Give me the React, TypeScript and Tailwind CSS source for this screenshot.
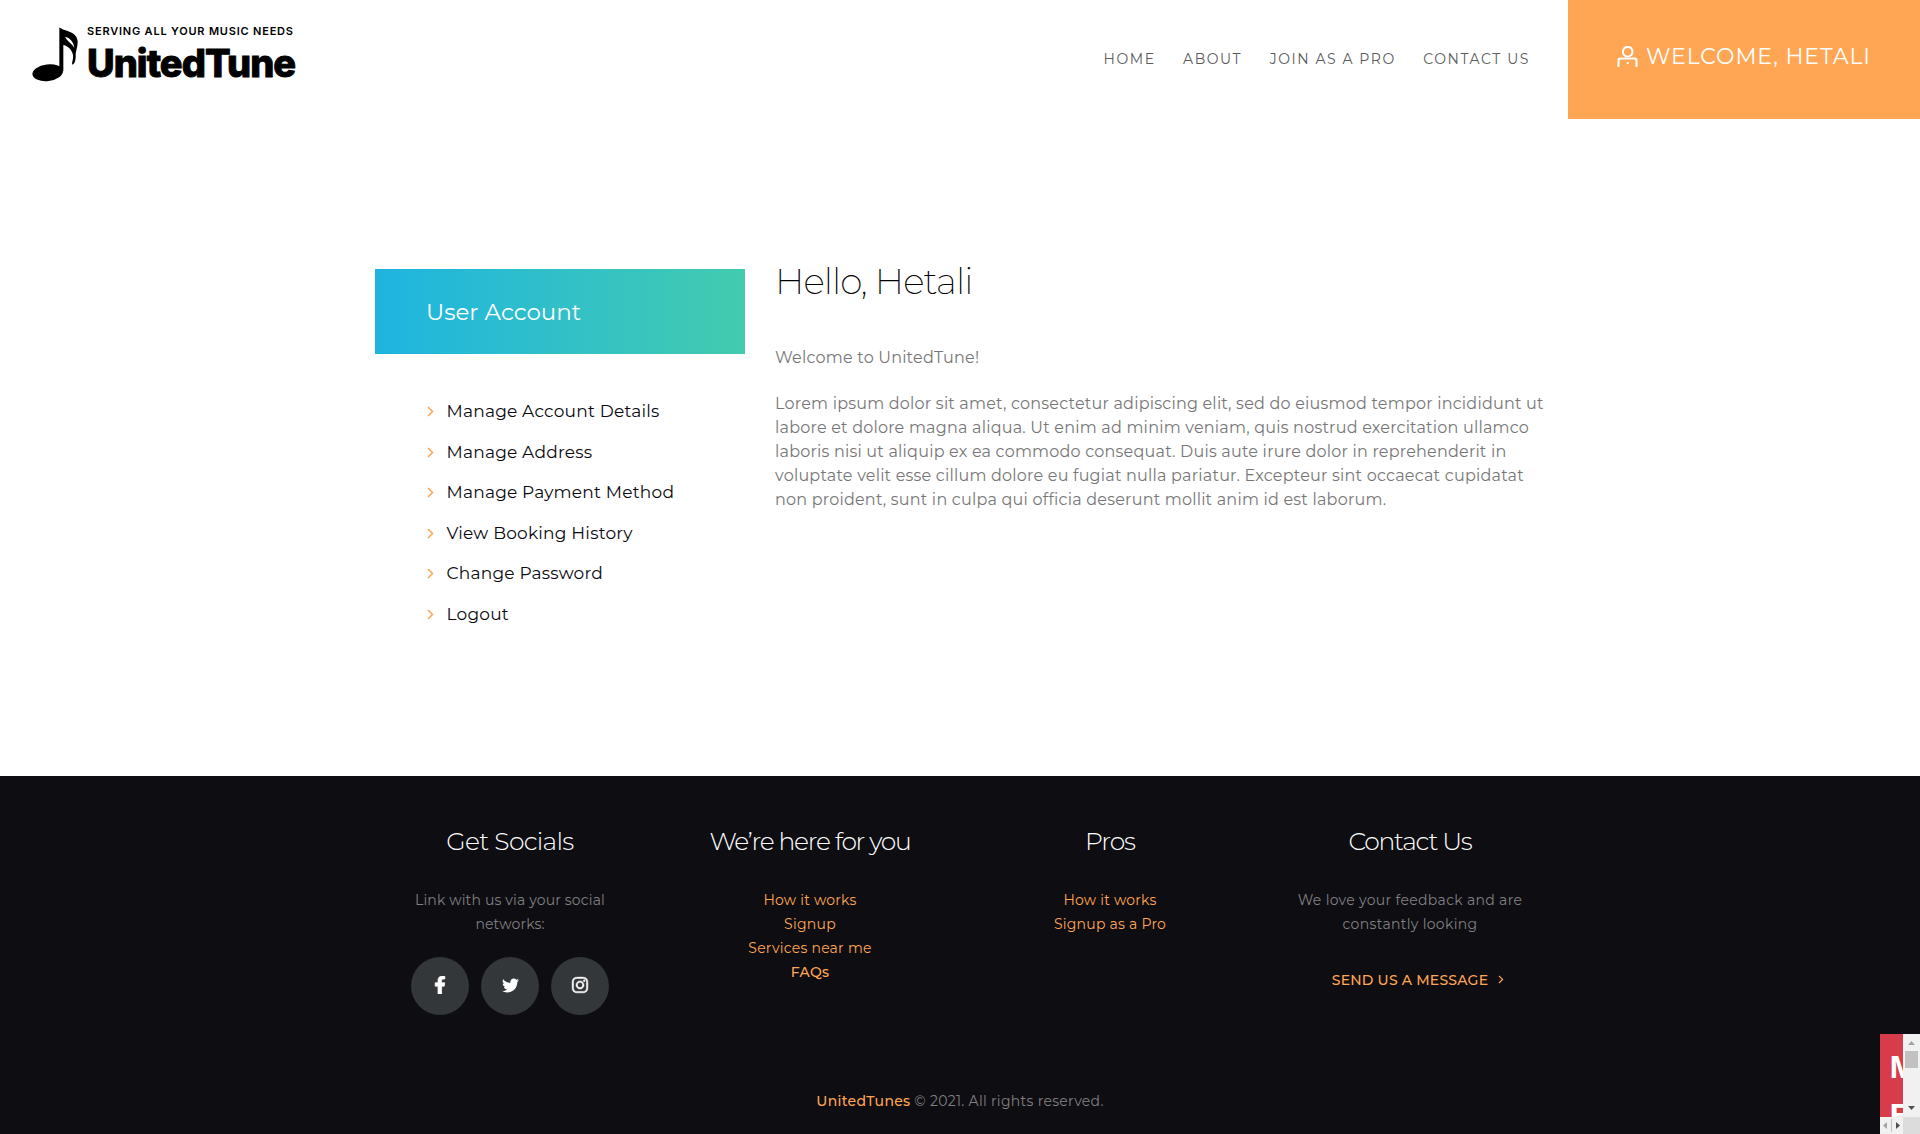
import React from "react";
import { FaFacebookF, FaTwitter, FaInstagram } from "react-icons/fa";

const NAV = ["HOME", "ABOUT", "JOIN AS A PRO", "CONTACT US"];

const MENU = [
  "Manage Account Details",
  "Manage Address",
  "Manage Payment Method",
  "View Booking History",
  "Change Password",
  "Logout",
];

const LOREM = [
  "Lorem ipsum dolor sit amet, consectetur adipiscing elit, sed do eiusmod tempor incididunt ut",
  "labore et dolore magna aliqua. Ut enim ad minim veniam, quis nostrud exercitation ullamco",
  "laboris nisi ut aliquip ex ea commodo consequat. Duis aute irure dolor in reprehenderit in",
  "voluptate velit esse cillum dolore eu fugiat nulla pariatur. Excepteur sint occaecat cupidatat",
  "non proident, sunt in culpa qui officia deserunt mollit anim id est laborum.",
];

function Chevron({ className }: { className: string }) {
  return (
    <svg viewBox="0 0 7 11" fill="none" stroke="currentColor" strokeWidth="1.5" className={className}>
      <path d="M1 1l4.500 4.500L1 10" />
    </svg>
  );
}

function Logo() {
  return (
    <a className="flex pl-[30px] pt-[25px] text-black">
      <svg viewBox="89 75 150 174" className="h-[58px] w-[50px]" fill="currentColor">
        <path
          fillRule="evenodd"
          d="M177 82C190 94 230 93 232 124C232 142 227 152 226 163C227 180 223 192 217 194C211 190 223 175 216 158C210 143 198 137 189 135L189 214L177 207ZM194 110C200 124 214 129 222 143C219 123 206 112 194 110Z"
        />
        <ellipse cx="142" cy="218" rx="46" ry="25" transform="rotate(-7 142 218)" />
      </svg>
      <div className="ml-[7px] font-['Inter',sans-serif]">
        <div className="h-[14px] text-[11px] leading-[12px] font-semibold tracking-[0.8px] whitespace-nowrap">
          SERVING ALL YOUR MUSIC NEEDS
        </div>
        <div className="text-[38px] leading-[48px] font-extrabold tracking-[-0.95px] [-webkit-text-stroke:0.9px_black]">
          UnitedTune
        </div>
      </div>
    </a>
  );
}

function Column({ title, tracking, children }: { title: string; tracking: string; children: React.ReactNode }) {
  return (
    <section className="w-[300px] text-center text-sm leading-6 tracking-[0.16px]">
      <h4 className={`mb-8 text-[25px] leading-[30px] font-light text-white ${tracking}`}>{title}</h4>
      {children}
    </section>
  );
}

function Social({ children }: { children: React.ReactNode }) {
  return (
    <a className="flex size-[58px] items-center justify-center rounded-full bg-[#343739] pb-[2px] text-white">{children}</a>
  );
}

function AdWidget() {
  return (
    <div className="absolute right-0 bottom-0 grid h-[100px] w-10 grid-cols-[23px_17px] grid-rows-[83px_17px] overflow-hidden bg-[#dcdcdc]">
      <div className="overflow-hidden bg-[#d63c49] pt-2 pl-[9px] font-['Open_Sans',sans-serif] text-[31px] leading-[48px] font-bold text-white">
        <div>M</div>
        <div>E</div>
      </div>
      <div className="flex flex-col items-center bg-[#f1f1f1]">
        <svg viewBox="0 0 17 17" className="size-[17px]" fill="#a3a3a3"><path d="M5 11L8.500 7L12 11Z" /></svg>
        <div className="h-[17px] w-[13px] bg-[#c1c1c1]" />
        <svg viewBox="0 0 17 17" className="mt-auto size-[17px]" fill="#505050"><path d="M5 6L8.500 10L12 6Z" /></svg>
      </div>
      <div className="flex bg-[#f1f1f1]">
        <svg viewBox="0 0 23 17" className="h-[17px] w-[23px]">
          <path d="M7 5L3 8.500L7 12Z" fill="#a3a3a3" />
          <path d="M11 2h1v13h-1z" fill="#c1c1c1" />
          <path d="M16 5L20 8.500L16 12Z" fill="#505050" />
        </svg>
      </div>
    </div>
  );
}

export default function App() {
  return (
    <div className="relative flex h-[1134px] w-[1920px] flex-col overflow-hidden bg-white font-['Montserrat','Inter',sans-serif] text-[#777]">
      <header className="flex h-[119px] shrink-0">
        <Logo />
        <nav className="ml-auto flex items-center gap-[27.5px] pr-[38px] pb-px text-sm tracking-[1.56px] text-[#5c5c5c]">
          {NAV.map((n) => (
            <a key={n}>{n}</a>
          ))}
        </nav>
        <a className="flex w-[352px] items-center pb-[6px] pl-[49px] bg-[#ffa654] text-white">
          <svg viewBox="0 0 21 21" className="mb-px h-[21px] w-[21px]" fill="none" stroke="currentColor" strokeWidth="2.1">
            <circle cx="10.700" cy="5.700" r="4.800" />
            <path d="M1.500 21v-6.500q0-2 2-2h14q2 0 2 2V21" />
            <path d="M9.700 17h2" />
          </svg>
          <span className="ml-[8px] text-[22px] tracking-[0.93px] whitespace-nowrap">WELCOME, HETALI</span>
        </a>
      </header>

      <main className="mx-auto flex w-[1170px] grow gap-[30px] pt-[150px]">
        <aside className="w-[370px]">
          <h3 className="flex h-[85px] items-center bg-linear-to-r from-[#1eb4e0] to-[#43cbae] pt-[2px] pl-[51px] text-[23px] text-white">
            User Account
          </h3>
          <ul className="mt-[37.5px] pl-[52px] text-[17px] tracking-[0.21px] text-[#0a0910]">
            {MENU.map((m) => (
              <li key={m} className="flex h-[40.5px] items-center">
                <Chevron className="h-[11px] w-[7px] text-[#ffa654]" />
                <span className="ml-[12.5px]">{m}</span>
              </li>
            ))}
          </ul>
        </aside>
        <article className="-mt-[10px] text-base leading-6 tracking-[0.21px]">
          <h1 className="text-[36px] leading-[44px] font-extralight tracking-[-0.93px] text-black">Hello, Hetali</h1>
          <p className="mt-[43px]">Welcome to UnitedTune!</p>
          <p className="mt-[22px]">
            {LOREM.map((l) => (
              <span key={l} className="block whitespace-nowrap">{l}</span>
            ))}
          </p>
        </article>
      </main>

      <footer className="h-[358px] shrink-0 bg-[#0e0d12] pt-[50px] text-sm leading-6 text-[#808082]">
        <div className="mx-auto flex h-[263px] w-[1200px]">
          <Column title="Get Socials" tracking="tracking-[-0.66px]">
            <p>Link with us via your social<br />networks:</p>
            <div className="mt-[21px] flex justify-center gap-3">
              <Social><FaFacebookF className="size-[18px]" stroke="currentColor" strokeWidth="22" /></Social>
              <Social><FaTwitter className="size-[17px]" /></Social>
              <Social><FaInstagram className="size-[18px]" stroke="currentColor" strokeWidth="14" /></Social>
            </div>
          </Column>
          <Column title="We’re here for you" tracking="tracking-[-1.29px]">
            <ul className="tracking-[0.24px] text-[#ffa654]">
              <li>How it works</li>
              <li>Signup</li>
              <li>Services near me</li>
              <li className="font-medium">FAQs</li>
            </ul>
          </Column>
          <Column title="Pros" tracking="tracking-[-1.1px]">
            <ul className="tracking-[0.24px] text-[#ffa654]">
              <li>How it works</li>
              <li>Signup as a Pro</li>
            </ul>
          </Column>
          <Column title="Contact Us" tracking="tracking-[-1.24px]">
            <p className="tracking-[0.32px]">We love your feedback and are<br />constantly looking</p>
            <a className="mt-8 flex items-center justify-center pl-[16px] font-medium tracking-[0.22px] text-[#ffa654]">
              SEND US A MESSAGE <Chevron className="mb-[2px] ml-[10px] h-[9px] w-[6px]" />
            </a>
          </Column>
        </div>
        <p className="text-center tracking-[0.3px]">
          <span className="font-medium text-[#ffa654]">UnitedTunes</span> © 2021. All rights reserved.
        </p>
      </footer>
      <AdWidget />
    </div>
  );
}
